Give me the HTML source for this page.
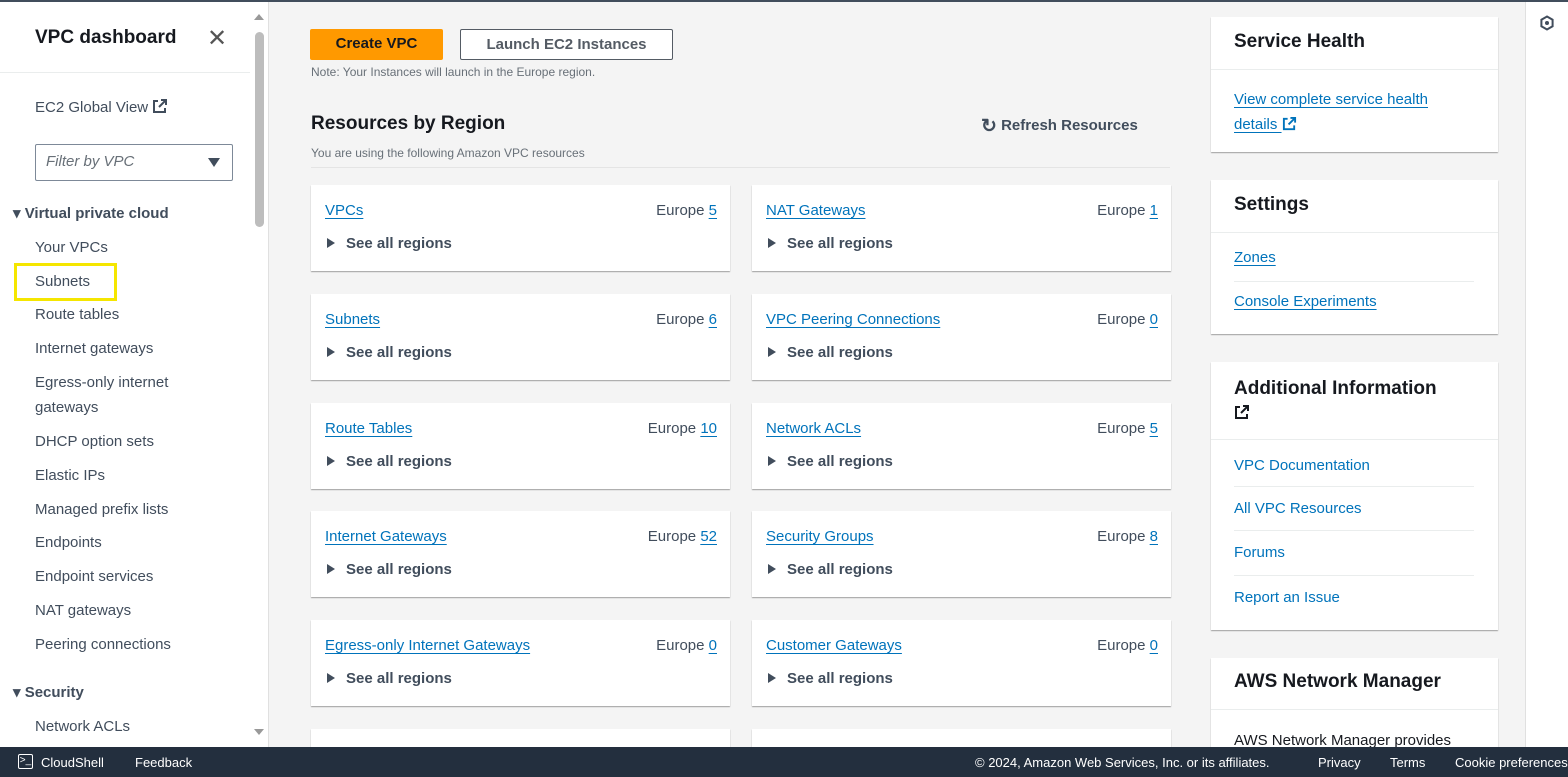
<!DOCTYPE html>
<html style="width:1568px;height:777px;overflow:hidden"><head><meta charset="utf-8"><style>
*{box-sizing:border-box;margin:0;padding:0}
body{width:1568px;height:777px;overflow:hidden;background:#f4f4f4;font-family:"Liberation Sans",sans-serif;color:#16191f;position:relative;font-size:15px}
.topline{position:absolute;left:0;top:0;width:1568px;height:2px;background:#414d5c}
.side{position:absolute;left:0;top:2px;width:269px;height:745px;background:#fff;border-right:1px solid #e0e0e0}
.side .t{position:absolute;left:35px;top:25px;font-size:19px;font-weight:bold}
.side .x{position:absolute;left:207px;top:22px;font-size:24px;color:#555}
.side .hr{position:absolute;left:0;top:70px;width:250px;height:1px;background:#eaeded}
.nav{position:absolute;left:35px;font-size:15px;color:#414d5c}
.sec{position:absolute;left:13px;font-size:15px;font-weight:bold;color:#414d5c}
.sel{position:absolute;left:35px;top:142px;width:198px;height:37px;border:1px solid #7d8998;border-radius:2px;font-style:italic;color:#687078;padding:8px 10px;font-size:15px}
.sel:after{content:"";position:absolute;right:12px;top:13px;border-left:6px solid transparent;border-right:6px solid transparent;border-top:9px solid #414d5c}
.sb{position:absolute;left:255px;top:30px;width:9px;height:195px;background:#bdbdbd;border-radius:5px}
.btn{position:absolute;top:29px;height:31px;font-size:15px;font-weight:bold;text-align:center;line-height:29px;border-radius:2px}
.card{position:absolute;width:419px;height:86px;background:#fff;box-shadow:0 1px 1px rgba(0,0,0,.35)}
.card a{position:absolute;left:14px;top:17px;color:#0073bb;text-decoration:underline;text-underline-offset:3px;font-size:15px}
.card .e{position:absolute;right:13px;top:17px;color:#414d5c;font-size:15px}
.card .e u{color:#0073bb;text-underline-offset:3px}
.card .s{position:absolute;left:16px;top:50px;font-weight:bold;color:#414d5c;font-size:15px}
.card .s:before{content:"";display:inline-block;border-top:5px solid transparent;border-bottom:5px solid transparent;border-left:8px solid #414d5c;margin-right:11px}
.pan{position:absolute;left:1211px;width:287px;background:#fff;box-shadow:0 1px 1px rgba(0,0,0,.35)}
.pan h3{font-size:19px;padding:14px 23px;border-bottom:1px solid #eaeded;height:53px}
.pan .l{position:absolute;left:23px;color:#0073bb;font-size:15px}
.pan .l.u{text-decoration:underline;text-underline-offset:3px}
.foot{position:absolute;left:0;top:747px;width:1568px;height:30px;background:#232f3e;color:#fff;font-size:13px}
.foot span{position:absolute;top:8px}
.rs{position:absolute;left:1525px;top:2px;width:43px;height:745px;background:#fff;border-left:1px solid #e0e0e0}
</style></head><body>
<div class="topline"></div>
<div class="side">
<div class="t">VPC dashboard</div><div class="x">✕</div><div class="hr"></div>
<div class="nav" style="top:96px">EC2 Global View <svg width="16" height="16" viewBox="0 0 16 16" style="vertical-align:-2px"><path d="M9 2h5v5M14 2L7 9M6 3H2v11h11v-4" fill="none" stroke="#414d5c" stroke-width="2"/></svg></div>
<div class="sel">Filter by VPC</div>
<div class="sec" style="top:202px">▾ Virtual private cloud</div>
<div class="nav" style="top:237px">Your VPCs</div>
<div style="position:absolute;left:14px;top:261px;width:103px;height:38px;border:3px solid #f5e600"></div>
<div class="nav" style="top:271px">Subnets</div>
<div class="nav" style="top:304px">Route tables</div>
<div class="nav" style="top:338px">Internet gateways</div>
<div class="nav" style="top:368px;line-height:25px">Egress-only internet<br>gateways</div>
<div class="nav" style="top:431px">DHCP option sets</div>
<div class="nav" style="top:465px">Elastic IPs</div>
<div class="nav" style="top:499px">Managed prefix lists</div>
<div class="nav" style="top:532px">Endpoints</div>
<div class="nav" style="top:566px">Endpoint services</div>
<div class="nav" style="top:600px">NAT gateways</div>
<div class="nav" style="top:634px">Peering connections</div>
<div class="sec" style="top:681px">▾ Security</div>
<div class="nav" style="top:716px">Network ACLs</div>
<div class="sb"></div>
<div style="position:absolute;left:254px;top:12px;border-left:5px solid transparent;border-right:5px solid transparent;border-bottom:6px solid #999"></div>
<div style="position:absolute;left:254px;top:727px;border-left:5px solid transparent;border-right:5px solid transparent;border-top:6px solid #999"></div>
</div>
<div class="btn" style="left:310px;width:133px;background:#ff9900;color:#16191f">Create VPC</div>
<div class="btn" style="left:460px;width:213px;background:#fff;border:1px solid #545b64;color:#545b64">Launch EC2 Instances</div>
<div style="position:absolute;left:311px;top:65px;font-size:12px;color:#687078">Note: Your Instances will launch in the Europe region.</div>
<div style="position:absolute;left:311px;top:113px;font-size:19px;font-weight:bold">Resources by Region</div>
<div style="position:absolute;left:311px;top:146px;font-size:12px;color:#687078">You are using the following Amazon VPC resources</div>
<div style="position:absolute;left:981px;top:115px;font-size:15px;font-weight:bold;color:#414d5c"><span style="font-size:19px;vertical-align:-2px">↻</span> Refresh Resources</div>
<div style="position:absolute;left:311px;top:167px;width:859px;height:1px;background:#e4e4e4"></div>

<div class="card" style="left:311px;top:185px"><a>VPCs</a><div class="e">Europe <u>5</u></div><div class="s">See all regions</div></div>
<div class="card" style="left:752px;top:185px"><a>NAT Gateways</a><div class="e">Europe <u>1</u></div><div class="s">See all regions</div></div>
<div class="card" style="left:311px;top:294px"><a>Subnets</a><div class="e">Europe <u>6</u></div><div class="s">See all regions</div></div>
<div class="card" style="left:752px;top:294px"><a>VPC Peering Connections</a><div class="e">Europe <u>0</u></div><div class="s">See all regions</div></div>
<div class="card" style="left:311px;top:403px"><a>Route Tables</a><div class="e">Europe <u>10</u></div><div class="s">See all regions</div></div>
<div class="card" style="left:752px;top:403px"><a>Network ACLs</a><div class="e">Europe <u>5</u></div><div class="s">See all regions</div></div>
<div class="card" style="left:311px;top:511px"><a>Internet Gateways</a><div class="e">Europe <u>52</u></div><div class="s">See all regions</div></div>
<div class="card" style="left:752px;top:511px"><a>Security Groups</a><div class="e">Europe <u>8</u></div><div class="s">See all regions</div></div>
<div class="card" style="left:311px;top:620px"><a>Egress-only Internet Gateways</a><div class="e">Europe <u>0</u></div><div class="s">See all regions</div></div>
<div class="card" style="left:752px;top:620px"><a>Customer Gateways</a><div class="e">Europe <u>0</u></div><div class="s">See all regions</div></div>
<div class="card" style="left:311px;top:729px;height:18px"></div>
<div class="card" style="left:752px;top:729px;height:18px"></div>

<div class="pan" style="top:17px;height:135px"><h3>Service Health</h3>
<div class="l u" style="top:70px;line-height:25px">View complete service health<br>details <svg width="15" height="15" viewBox="0 0 16 16" style="vertical-align:-2px"><path d="M9 2h5v5M14 2L7 9M6 3H2v11h11v-4" fill="none" stroke="#0073bb" stroke-width="2"/></svg></div></div>
<div class="pan" style="top:180px;height:154px"><h3>Settings</h3>
<div class="l u" style="top:69px">Zones</div>
<div style="position:absolute;left:23px;top:101px;width:240px;height:1px;background:#eaeded"></div>
<div class="l u" style="top:113px">Console Experiments</div></div>
<div class="pan" style="top:362px;height:268px"><h3 style="height:78px;line-height:26px">Additional Information<br><svg width="16" height="16" viewBox="0 0 16 16"><path d="M9 2h5v5M14 2L7 9M6 3H2v11h11v-4" fill="none" stroke="#16191f" stroke-width="2"/></svg></h3>
<div class="l" style="top:95px">VPC Documentation</div>
<div style="position:absolute;left:23px;top:124px;width:240px;height:1px;background:#eaeded"></div>
<div class="l" style="top:138px">All VPC Resources</div>
<div style="position:absolute;left:23px;top:168px;width:240px;height:1px;background:#eaeded"></div>
<div class="l" style="top:182px">Forums</div>
<div style="position:absolute;left:23px;top:213px;width:240px;height:1px;background:#eaeded"></div>
<div class="l" style="top:227px">Report an Issue</div></div>
<div class="pan" style="top:658px;height:89px;overflow:hidden"><h3 style="height:52px;padding-top:13px">AWS Network Manager</h3>
<div style="position:absolute;left:23px;top:74px;font-size:15px;color:#16191f">AWS Network Manager provides</div></div>

<div class="rs"><svg width="16" height="16" viewBox="0 0 16 16" style="position:absolute;left:13px;top:13px"><path d="M8 1.5l5.6 3.2v6.6L8 14.5l-5.6-3.2V4.7z" fill="none" stroke="#414d5c" stroke-width="2"/><circle cx="8" cy="8" r="2" fill="#414d5c"/></svg></div>

<div class="foot">
<span style="left:18px;top:7px;width:15px;height:15px;border:1.5px solid #fff;border-radius:2px;font-size:10px;line-height:12px;text-align:center">&gt;_</span>
<span style="left:41px">CloudShell</span>
<span style="left:135px">Feedback</span>
<span style="left:975px">© 2024, Amazon Web Services, Inc. or its affiliates.</span>
<span style="left:1318px">Privacy</span>
<span style="left:1390px">Terms</span>
<span style="left:1455px;white-space:nowrap">Cookie preferences</span>
</div>
</body></html>
